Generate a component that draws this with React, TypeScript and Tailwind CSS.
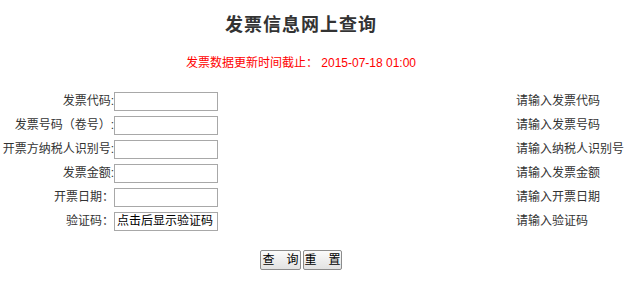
import React from "react";

const rows: { label: string; hint: string; value?: string }[] = [
  { label: "发票代码:", hint: "请输入发票代码" },
  { label: "发票号码（卷号）:", hint: "请输入发票号码" },
  { label: "开票方纳税人识别号:", hint: "请输入纳税人识别号" },
  { label: "发票金额:", hint: "请输入发票金额" },
  { label: "开票日期：", hint: "请输入开票日期" },
  { label: "验证码：", hint: "请输入验证码", value: "点击后显示验证码" },
];

export default function App() {
  return (
    <div
      className="w-[626px] h-[292px] bg-white text-[12px] text-[#333] overflow-hidden"
      style={{ fontFamily: '"Liberation Sans", "Noto Sans CJK SC", sans-serif' }}
    >
      <div className="w-[602px] flex flex-col items-center">
        <div className="mt-[13px] h-[24px] leading-[24px] text-[18px] font-bold tracking-[1px] text-[#333]">
          发票信息网上查询
        </div>
        <div className="mt-[18px] h-[16px] leading-[16px] text-[12px] text-[#ff0000] whitespace-nowrap">
          发票数据更新时间截止： 2015-07-18 01:00
        </div>
      </div>
      <div className="mt-[18px] flex flex-col">
        {rows.map((r) => (
          <div key={r.hint} className="h-[24px] flex items-center">
            <div className="w-[114px] text-right whitespace-nowrap leading-[16px]">{r.label}</div>
            <div className="w-[104px] h-[19px] border border-[#a8a8a8] bg-white px-[2px] text-[12px] leading-[17px] text-black whitespace-nowrap overflow-hidden">
              {r.value ?? ""}
            </div>
            <div className="flex-1" />
            <div className="w-[110px] whitespace-nowrap leading-[16px]">{r.hint}</div>
          </div>
        ))}
      </div>
      <div className="w-[602px] mt-[17px] flex justify-center gap-[2px]">
        <button className="w-[41px] h-[20px] border border-[#8c8c8c] rounded-[2px] bg-gradient-to-b from-[#fbfbfb] to-[#e2e2e2] text-black text-[12px] leading-[18px] whitespace-pre">
          查　询
        </button>
        <button className="w-[39px] h-[20px] border border-[#8c8c8c] rounded-[2px] bg-gradient-to-b from-[#fbfbfb] to-[#e2e2e2] text-black text-[12px] leading-[18px] whitespace-pre">
          重　置
        </button>
      </div>
    </div>
  );
}
